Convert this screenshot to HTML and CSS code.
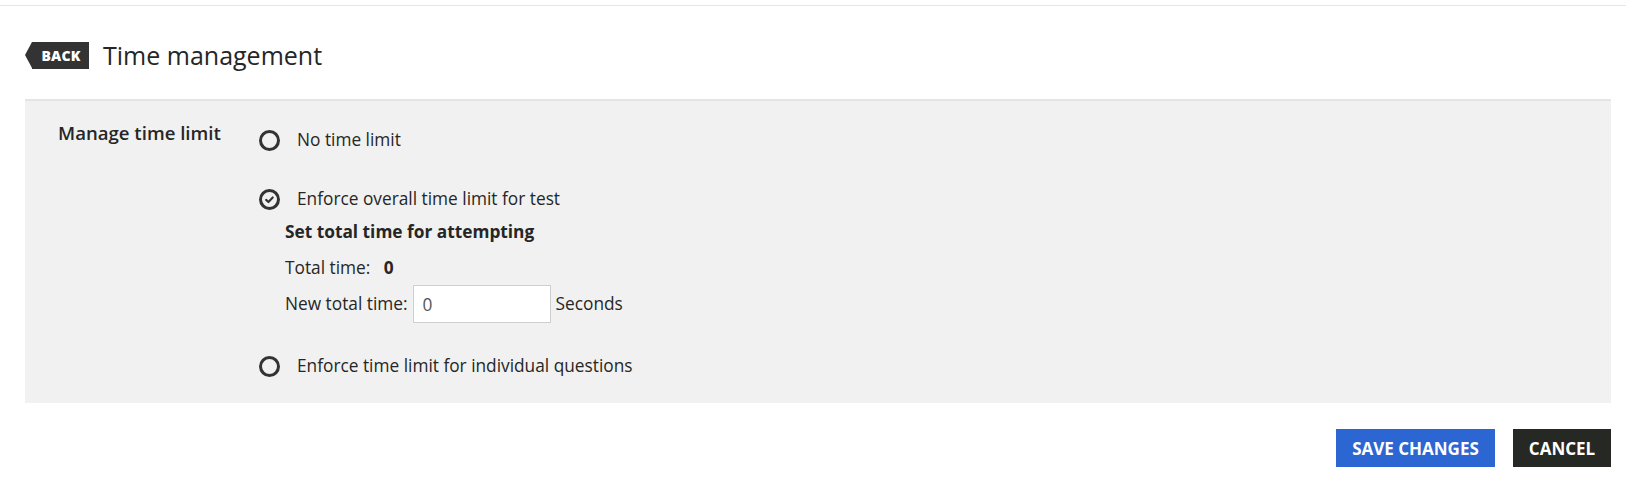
FILE: index.html
```html
<!DOCTYPE html>
<html lang="en">
<head>
<meta charset="utf-8">
<title>Time management</title>
<link rel="stylesheet" href="styles.css">
</head>
<body>
<div class="topbar"></div>
<header class="page-header">
  <a class="back-btn" href="#">BACK</a>
  <h1 class="page-title">Time management</h1>
</header>
<section class="panel">
  <div class="field-label">Manage time limit</div>
  <div class="options">
    <label class="option">
      <span class="radio"></span>
      <span class="option-text">No time limit</span>
    </label>
    <label class="option option-checked">
      <span class="radio radio-checked">
        <svg viewBox="0 0 20 20" width="20" height="20"><path d="M5.5 10.5 L8.6 13.4 L14.3 7.3" fill="none" stroke="#333" stroke-width="2.8" stroke-linecap="round" stroke-linejoin="round"/></svg>
      </span>
      <span class="option-text">Enforce overall time limit for test</span>
    </label>
    <div class="sub">
      <div class="sub-title">Set total time for attempting</div>
      <div class="sub-line">Total time: <strong class="total-val">0</strong></div>
      <div class="sub-line input-row">New total time: <input class="time-input" type="text" value="0"> Seconds</div>
    </div>
    <label class="option option-last">
      <span class="radio"></span>
      <span class="option-text">Enforce time limit for individual questions</span>
    </label>
  </div>
</section>
<div class="actions">
  <button class="btn btn-save">SAVE CHANGES</button>
  <button class="btn btn-cancel">CANCEL</button>
</div>
</body>
</html>
```
FILE: styles.css
```css
* { box-sizing: border-box; }
body {
  margin: 0;
  font-family: "Open Sans", "Liberation Sans", sans-serif;
  color: #262626;
  background: #fff;
}
.topbar {
  height: 6px;
  border-bottom: 1px solid #e4e4e4;
}
.page-header {
  display: flex;
  align-items: flex-start;
  padding: 36px 0 0 25px;
  height: 93px;
}
.back-btn {
  position: relative;
  display: flex;
  align-items: center;
  justify-content: center;
  height: 27px;
  width: 57px;
  margin-left: 7px;
  background: #333;
  color: #fff;
  font-weight: 800;
  font-size: 14px;
  letter-spacing: 0.2px;
  text-decoration: none;
  padding-left: 1px;
}
.back-btn::before {
  content: "";
  position: absolute;
  left: -7px;
  top: 0;
  border-top: 13.5px solid transparent;
  border-bottom: 13.5px solid transparent;
  border-right: 7px solid #333;
}
.page-title {
  margin: 0 0 0 14px;
  font-size: 25px;
  font-weight: 400;
  line-height: 27px;
  color: #262626;
}
.panel {
  display: flex;
  margin: 0 15px 0 25px;
  border-top: 2px solid #e3e4e3;
  background: #f0f1f0;
  padding: 20px 0 25px 33px;
}
.field-label {
  width: 201px;
  font-size: 18.6px;
  font-weight: 600;
  line-height: 24px;
}
.options {
  display: flex;
  flex-direction: column;
  padding-top: 7px;
  font-size: 17.3px;
  line-height: 24px;
}
.option {
  display: flex;
  align-items: center;
  gap: 17px;
}
.option-checked { margin-top: 35px; }
.option-last { margin-top: 31px; }
.radio {
  width: 21px;
  height: 21px;
  border: 3px solid #333;
  border-radius: 50%;
  display: flex;
  align-items: center;
  justify-content: center;
  flex: none;
}
.radio svg { width: 15px; height: 15px; }
.sub {
  padding-left: 26px;
  display: flex;
  flex-direction: column;
}
.sub-title {
  margin-top: 9px;
  font-weight: 700;
}
.sub-line { margin-top: 12px; }
.total-val { margin-left: 9px; font-weight: 700; }
.input-row {
  margin-top: 5px;
  display: flex;
  align-items: center;
  gap: 5px;
}
.time-input {
  width: 138px;
  height: 38px;
  border: 1px solid #cfcfcf;
  background: #fff;
  font-family: inherit;
  font-size: 17.3px;
  color: #555;
  padding: 0 9px;
}
.actions {
  display: flex;
  justify-content: flex-end;
  gap: 18px;
  margin: 26px 15px 0 0;
}
.btn {
  height: 38px;
  border: none;
  color: #fff;
  font-family: inherit;
  font-weight: 700;
  font-size: 17px;
  padding: 0;
}
.btn-save { background: #2b66d2; width: 159px; }
.btn-cancel { background: #262823; width: 98px; }
```
